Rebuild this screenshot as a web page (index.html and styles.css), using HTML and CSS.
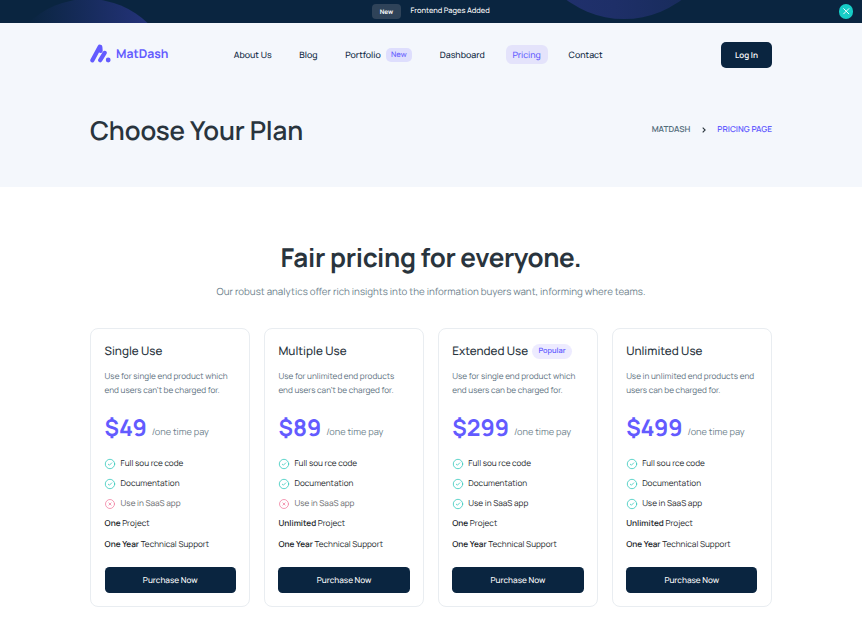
FILE: index.html
```html
<!DOCTYPE html>
<html lang="en">
<head>
<meta charset="utf-8">
<title>MatDash Pricing</title>
<link rel="stylesheet" href="styles.css">
</head>
<body>
<svg class="defs" aria-hidden="true">
  <symbol id="check" viewBox="0 0 12 12"><circle cx="6" cy="6" r="4.7"/><path d="M4.3 6.2 5.4 7.2 7.7 4.9"/></symbol>
  <symbol id="cross" viewBox="0 0 12 12"><circle cx="6" cy="6" r="4.5"/><path d="M4.9 4.9 7.1 7.1M7.1 4.9 4.9 7.1"/></symbol>
</svg>
<div class="banner">
  <svg class="banner-art" viewBox="0 0 862 23">
    <defs>
      <linearGradient id="g1" x1="0" x2="1"><stop offset=".15" stop-color="#0a2540"/><stop offset="1" stop-color="#293585"/></linearGradient>
      <linearGradient id="g2" x1="0" x2="1"><stop offset="0" stop-color="#21316f"/><stop offset=".45" stop-color="#1e2f68"/><stop offset="1" stop-color="#152a56"/></linearGradient>
    </defs>
    <circle cx="88" cy="85" r="86" fill="url(#g1)"/>
    <circle cx="624" cy="-77" r="96" fill="url(#g2)"/>
  </svg>
  <span class="banner-badge">New</span>
  <span class="banner-text">Frontend Pages Added</span>
  <button class="close" aria-label="Close"><svg viewBox="0 0 14 14"><path d="M4.5 4.5 9.5 9.5M9.5 4.5 4.5 9.5"/></svg></button>
</div>
<header class="hero">
  <div class="container topbar">
    <a class="logo"><svg viewBox="0 0 21 19"><path d="M2.4 16.3 9.7 2.7M10.2 16.2 14.7 8.9M10.3 2.9 10.6 6.8"/><circle cx="18.2" cy="16" r="2.4"/></svg><span>MatDash</span></a>
    <nav class="nav">
      <a>About Us</a><a>Blog</a><a>Portfolio<span class="nav-badge">New</span></a><a>Dashboard</a><a class="active">Pricing</a><a>Contact</a>
    </nav>
    <a class="login">Log In</a>
  </div>
  <div class="container title-row">
    <h1>Choose Your Plan</h1>
    <div class="crumbs"><span>MATDASH</span><svg viewBox="0 0 6 8"><path d="M1.7 1.7 4.1 4 1.7 6.3"/></svg><span class="current">PRICING PAGE</span></div>
  </div>
</header>
<main class="container">
  <h2>Fair pricing for everyone.</h2>
  <p class="lead">Our robust analytics offer rich insights into the information buyers want, informing where teams.</p>
  <div class="cards">
    <article class="card">
      <h3>Single Use</h3>
      <p class="desc">Use for single end product which<br>end users can’t be charged for.</p>
      <div class="price"><strong>$49</strong><span>/one time pay</span></div>
      <ul>
        <li><svg class="ok"><use href="#check"/></svg>Full sou rce code</li>
        <li><svg class="ok"><use href="#check"/></svg>Documentation</li>
        <li class="off"><svg class="no"><use href="#cross"/></svg>Use in SaaS app</li>
        <li><b>One</b> Project</li>
        <li><b>One Year</b> Technical Support</li>
      </ul>
      <button class="buy">Purchase Now</button>
    </article>
    <article class="card">
      <h3>Multiple Use</h3>
      <p class="desc">Use for unlimited end products<br>end users can’t be charged for.</p>
      <div class="price"><strong>$89</strong><span>/one time pay</span></div>
      <ul>
        <li><svg class="ok"><use href="#check"/></svg>Full sou rce code</li>
        <li><svg class="ok"><use href="#check"/></svg>Documentation</li>
        <li class="off"><svg class="no"><use href="#cross"/></svg>Use in SaaS app</li>
        <li><b>Unlimited</b> Project</li>
        <li><b>One Year</b> Technical Support</li>
      </ul>
      <button class="buy">Purchase Now</button>
    </article>
    <article class="card">
      <h3>Extended Use<span class="popular">Popular</span></h3>
      <p class="desc">Use for single end product which<br>end users can be charged for.</p>
      <div class="price"><strong>$299</strong><span>/one time pay</span></div>
      <ul>
        <li><svg class="ok"><use href="#check"/></svg>Full sou rce code</li>
        <li><svg class="ok"><use href="#check"/></svg>Documentation</li>
        <li><svg class="ok"><use href="#check"/></svg>Use in SaaS app</li>
        <li><b>One</b> Project</li>
        <li><b>One Year</b> Technical Support</li>
      </ul>
      <button class="buy">Purchase Now</button>
    </article>
    <article class="card">
      <h3>Unlimited Use</h3>
      <p class="desc">Use in unlimited end products end<br>users can be charged for.</p>
      <div class="price"><strong>$499</strong><span>/one time pay</span></div>
      <ul>
        <li><svg class="ok"><use href="#check"/></svg>Full sou rce code</li>
        <li><svg class="ok"><use href="#check"/></svg>Documentation</li>
        <li><svg class="ok"><use href="#check"/></svg>Use in SaaS app</li>
        <li><b>Unlimited</b> Project</li>
        <li><b>One Year</b> Technical Support</li>
      </ul>
      <button class="buy">Purchase Now</button>
    </article>
  </div>
</main>
</body>
</html>
```
FILE: styles.css
```css
* { box-sizing: border-box; margin: 0; padding: 0; }
body { font-family: Manrope, Inter, "Liberation Sans", sans-serif; color: #29343d; background: #fff; overflow: hidden; height: 623px; text-rendering: geometricPrecision; }
svg { display: block; fill: none; }
.defs { position: absolute; width: 0; height: 0; }
.container { width: 682px; margin: 0 auto; }
button { font: inherit; border: 0; text-rendering: inherit; }

.banner { position: relative; height: 22.5px; background: #0a2540; color: #fff; display: flex; align-items: center; overflow: hidden; padding: 0 9px 0 372px; font-weight: 500; }
.banner-art { position: absolute; left: 0; top: 0; width: 862px; height: 23px; }
.banner-badge { position: relative; width: 29px; height: 15px; border-radius: 4px; background: #2f4359; font-size: 6.4px; font-weight: 700; line-height: 15px; text-align: center; margin-right: 9.5px; }
.banner-text { position: relative; font-size: 7.5px; line-height: 23.5px; height: 22.5px; }
.close { position: relative; margin-left: auto; width: 14.5px; height: 14.5px; border-radius: 50%; background: #16cdc7; }
.close svg { width: 14.5px; height: 14.5px; stroke: #fff; stroke-width: .9; stroke-linecap: round; }

.hero { height: 164.5px; background: #f4f7fc; }
.topbar { display: flex; align-items: center; padding-top: 19px; }
.logo { display: flex; align-items: center; width: 137px; color: #635bff; font-size: 12.2px; font-weight: 700; gap: 5px; line-height: 18px; padding-bottom: 2px; }
.logo svg { width: 21px; height: 19px; stroke: #635bff; stroke-width: 4.2; stroke-linecap: round; }
.logo circle { fill: #635bff; stroke: none; }
.nav { display: flex; align-items: center; flex: 1; gap: 14.1px; font-size: 8.8px; font-weight: 500; color: #0a2540; }
.nav a { display: flex; align-items: center; height: 19px; padding: 0 6.8px; border-radius: 6px; white-space: nowrap; }
.nav .active { background: #e4e3fb; color: #635bff; }
.nav-badge { background: #dedefd; color: #635bff; font-size: 7.6px; height: 14px; line-height: 14px; padding: 0 5.5px; border-radius: 5px; margin-left: 4.8px; }
.login { width: 51px; height: 26px; line-height: 27px; background: #0a2540; color: #fff; border-radius: 5px; text-align: center; font-size: 8.1px; font-weight: 600; }
.title-row { display: flex; align-items: center; justify-content: space-between; padding-top: 42px; }
h1 { font-size: 26px; line-height: 40px; font-weight: 600; letter-spacing: -.15px; }
.crumbs { display: flex; align-items: center; font-size: 8.2px; line-height: 14px; font-weight: 600; color: #526b7a; padding-top: 1px; }
.crumbs svg { width: 6px; height: 8px; margin: 0 10.5px; stroke: #29343d; stroke-width: 1.1; }
.crumbs .current { color: #635bff; }

h2 { margin-top: 50px; font-size: 26px; line-height: 40px; font-weight: 700; text-align: center; letter-spacing: -.3px; }
.lead { text-align: center; font-size: 9.75px; line-height: 18px; margin-top: 6px; color: #6d7f8c; }
.cards { display: grid; grid-template-columns: repeat(4, 1fr); gap: 13.4px; margin-top: 27px; }
.card { height: 279px; border: 1px solid #e9edf1; border-radius: 8px; padding: 13px 13.6px; }
h3 { display: flex; align-items: center; font-size: 11.7px; font-weight: 500; line-height: 18px; height: 18px; white-space: nowrap; }
.popular { height: 15px; line-height: 14.5px; border-radius: 8px; padding: 0 6px; margin-left: 4.2px; background: #edebff; color: #635bff; font-size: 7.4px; font-weight: 600; }
.desc { margin-top: 10.1px; font-size: 8.2px; line-height: 14px; color: #5c6f7e; white-space: nowrap; }
.price { display: flex; align-items: baseline; gap: 5px; margin-top: 12px; height: 34px; line-height: 34px; }
.price strong { font-size: 23px; font-weight: 700; color: #635bff; }
.price span { position: relative; top: -1px; font-size: 9.2px; color: #6d7f8c; }
ul { list-style: none; margin-top: 9.4px; }
li { display: flex; align-items: center; height: 20.15px; font-size: 8.2px; color: #212529; white-space: pre; }
li.off { color: #66696c; }
li b { font-weight: 600; }
li svg { width: 12px; height: 12px; margin-right: 4.5px; margin-left: -.5px; stroke-width: .8; stroke-linecap: round; stroke-linejoin: round; }
.ok { stroke: #36c9bd; }
.no { stroke: #f181a2; }
.buy { display: block; width: 100%; height: 26px; margin-top: 12.5px; padding-top: 1px; background: #0a2540; color: #fff; border-radius: 4.5px; font-size: 8.2px; font-weight: 500; }
```
